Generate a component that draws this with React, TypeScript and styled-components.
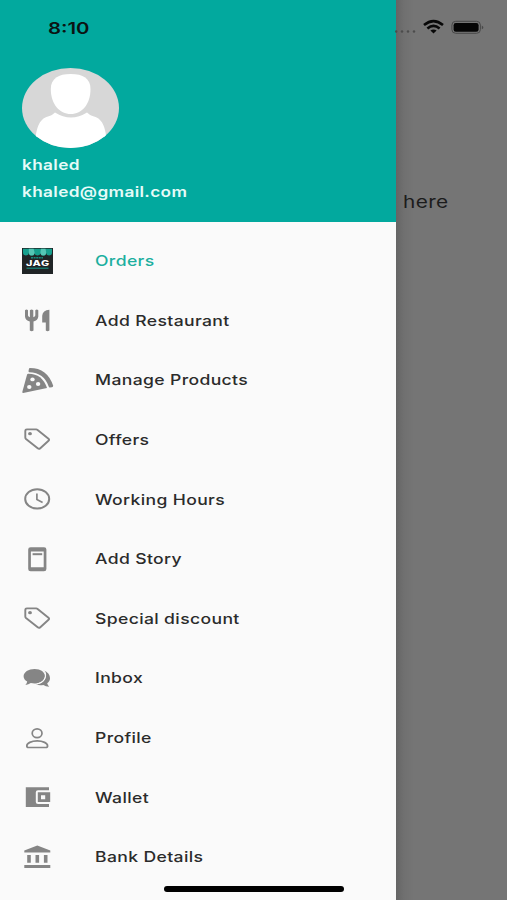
import React from 'react';
import styled, { createGlobalStyle } from 'styled-components';

const GlobalStyle = createGlobalStyle`
  * { box-sizing: border-box; }
  body {
    margin: 0;
    background: #757575;
    font-family: Inter, 'Liberation Sans', sans-serif;
  }
`;

const Screen = styled.div`
  position: relative;
  display: flex;
  width: 507px;
  height: 900px;
  overflow: hidden;
  background: #757575;
`;

const Drawer = styled.aside`
  display: flex;
  flex-direction: column;
  flex: none;
  width: 395.5px;
  height: 900px;
  background: #fafafa;
`;

const Header = styled.header`
  display: flex;
  flex-direction: column;
  height: 222px;
  padding: 17.5px 22px 0;
  background: #02a99e;
`;

const Stretched = styled.span<{ $scale: number }>`
  display: block;
  width: max-content;
  white-space: nowrap;
  transform: scaleX(${(p) => p.$scale});
  transform-origin: left center;
`;

const Clock = styled(Stretched)`
  height: 20px;
  margin-left: 25.5px;
  font-size: 16px;
  font-weight: 600;
  line-height: 20px;
  color: #0b1413;
`;

const Avatar = styled.svg`
  display: block;
  flex: none;
  width: 97px;
  height: 80px;
  margin: 30.5px 0 4px;
`;

const Account = styled(Stretched)`
  height: 26.5px;
  font-size: 14.5px;
  font-weight: 600;
  line-height: 26.5px;
  letter-spacing: 0.3px;
  color: #e6fbf8;
`;

const Menu = styled.nav`
  display: flex;
  flex-direction: column;
  padding-top: 8.7px;
`;

const Item = styled.a<{ $active?: boolean }>`
  display: flex;
  flex: none;
  align-items: center;
  gap: 41.6px;
  height: 59.65px;
  padding-left: 22px;
  color: ${(p) => (p.$active ? '#1caf9f' : '#2b2b2b')};
  font-size: 14.5px;
  font-weight: 500;
  line-height: 20px;
  letter-spacing: 0.3px;
`;

const Label = styled(Stretched)`
  padding-top: 1px;
`;

const Icon = styled.svg`
  flex: none;
  width: 31px;
  height: 26px;
  overflow: visible;
  color: #858585;
`;

const Backdrop = styled.main`
  flex: 1;
  padding: 18px 0 0;
  background: linear-gradient(90deg, #656565 0, #707070 8px, #757575 18px);
`;

const StatusIcons = styled.svg`
  display: block;
  width: 111px;
  height: 20px;
  overflow: visible;
`;

const Message = styled(Stretched)`
  margin: 152px 0 0 7px;
  font-size: 17px;
  line-height: 24px;
  letter-spacing: 0.3px;
  color: #1c1c1c;
`;

const HomeIndicator = styled.div`
  position: absolute;
  left: 164px;
  top: 886px;
  width: 180px;
  height: 5.5px;
  border-radius: 3px;
  background: #000;
`;

const tag = (
  <>
    <path
      d="M4.9 3.4H14.2Q15 3.4 15.6 3.9L26.5 12.7Q27.7 13.7 26.5 14.7L18.3 22.2Q17 23.4 15.7 22.3L4 13Q3.3 12.4 3.3 11.6V4.8Q3.3 3.4 4.9 3.4Z"
      fill="none"
      stroke="currentColor"
      strokeWidth="1.9"
    />
    <ellipse cx="8" cy="7.7" rx="1.9" ry="1.6" fill="currentColor" />
  </>
);

const icons: Record<string, React.ReactNode> = {
  store: (
    <>
      <rect width="31" height="26" fill="#202426" />
      <path d="M1 .8H30V4.5A2.9 3 0 0 1 24.2 4.5A2.9 3 0 0 1 18.4 4.5A2.9 3 0 0 1 12.6 4.5A2.9 3 0 0 1 6.8 4.5A2.9 3 0 0 1 1 4.5Z" fill="#169f8d" />
      <path d="M6.8 .8H11.6L12.6 4.5A2.9 3 0 0 1 6.8 4.5ZM19 .8H23.5L24.2 4.5A2.9 3 0 0 1 18.4 4.5Z" fill="#55c6b5" />
      <path d="M9 9.8H21" stroke="#168b7d" strokeWidth="1.5" strokeDasharray="2 .6" />
      <text x="4" y="17.6" fontSize="7.5" fontWeight="800" textLength="23.5" lengthAdjust="spacingAndGlyphs" fill="#fff">JAG</text>
      <path d="M4.5 20.2H26.5" stroke="#179b8b" strokeWidth="1" />
    </>
  ),
  restaurant: (
    <g fill="currentColor">
      <path d="M3 3.2Q4.5 2 6 3.2V8.6Q6.2 9.9 7.9 10.2V3.2Q9.6 2 11.3 3.2V10.2Q13.1 9.9 13.3 8.6V3.2Q14.8 2 16.3 3.2V9.5Q16 13.6 11.5 14.5V23.6Q9.7 24.9 7.8 23.6V14.5Q3.3 13.6 3 9.5Z" />
      <path d="M27.4 2.8V23.6Q25.6 24.9 23.8 23.6V15.6H20.2V8.8Q20.7 3.3 27.4 2.8Z" />
    </g>
  ),
  pizza: (
    <>
      <path d="M7.8 .9Q25.4 .9 31.2 18.8Q31.2 20 30 20.2L27.8 20.5Q27 20.5 26.7 19.5Q22 5.5 7.3 5.2Q6.3 5 6.5 4L7 1.7Q7.2 .9 7.8 .9Z" fill="currentColor" />
      <path d="M6.2 6.7Q20.2 6.5 25 21L1.2 25.9Q.2 26 .3 24.9L5 7.7Q5.3 6.8 6.2 6.7Z" fill="currentColor" />
      <g fill="#fafafa">
        <ellipse cx="10.5" cy="12.4" rx="2.2" ry="1.9" />
        <ellipse cx="16.1" cy="17" rx="2.2" ry="1.9" />
        <ellipse cx="7.3" cy="20" rx="2.2" ry="1.9" />
      </g>
    </>
  ),
  tag,
  clock: (
    <g fill="none" stroke="currentColor" strokeWidth="2">
      <ellipse cx="15.2" cy="12.9" rx="12" ry="9.7" />
      <path d="M14.9 7.6V13.5L20.6 16.4" strokeWidth="1.7" />
    </g>
  ),
  story: (
    <g fill="currentColor">
      <path fillRule="evenodd" d="M8.6 1.2H22Q24.4 1.2 24.4 3.4V23Q24.4 25.2 22 25.2H8.6Q6.2 25.2 6.2 23V3.4Q6.2 1.2 8.6 1.2ZM8.9 5.4V21.2H21.7V5.4Z" />
      <rect x="10.6" y="7.2" width="9.6" height="2" />
    </g>
  ),
  chat: (
    <g fill="currentColor">
      <path d="M21.6 5.4C25.8 6.8 28 9.7 28 13.3C28 15.3 27 17 25.2 18.3Q25.6 20.2 27.2 21.7Q23.6 21.7 21.4 19.9Q17.2 20.6 14 19.4C21.5 18.6 27 12.5 21.6 5.4Z" />
      <path d="M12.6 3.9C18.7 3.9 23 7 23 11.2C23 15.4 18.7 18.5 12.6 18.5Q10.6 18.5 8.8 18.1Q6.5 19.8 3.4 19.9Q5 18.5 5.2 16.6Q1.6 14.6 1.6 11.2C1.6 7 6.5 3.9 12.6 3.9Z" />
      <path d="M22.2 5.6C25.6 11.5 22.2 17.7 14.6 19" fill="none" stroke="#fafafa" strokeWidth="1.1" />
    </g>
  ),
  person: (
    <g fill="none" stroke="currentColor" strokeWidth="1.7">
      <ellipse cx="15.1" cy="8.2" rx="4.9" ry="4.4" />
      <path d="M15.2 15.8C21 15.8 25.6 18.3 25.6 20.9Q25.6 22.5 23.8 22.5H6.5Q4.8 22.5 4.8 20.9C4.8 18.3 9.3 15.8 15.2 15.8Z" />
    </g>
  ),
  wallet: (
    <g fill="currentColor" fillRule="evenodd">
      <path d="M3.8 3.3H27V6.3H16Q13.8 6.3 13.8 8.3V17.9Q13.8 20 16 20H27V22.9H3.8Z" />
      <path d="M15.8 8.3H28.2V18H15.8ZM19 11.2V15.2H23.2V11.2Z" />
    </g>
  ),
  bank: (
    <path fill="currentColor" d="M15.3 1.6L28.3 6.6V8.4H2.3V6.6ZM5.2 10.9H8.8V18.8H5.2ZM13.5 10.9H17.1V18.8H13.5ZM21.9 10.9H25.5V18.8H21.9ZM2.3 21H28.3V24H2.3Z" />
  ),
};

const items: { label: string; icon: string; active?: boolean }[] = [
  { label: 'Orders', icon: 'store', active: true },
  { label: 'Add Restaurant', icon: 'restaurant' },
  { label: 'Manage Products', icon: 'pizza' },
  { label: 'Offers', icon: 'tag' },
  { label: 'Working Hours', icon: 'clock' },
  { label: 'Add Story', icon: 'story' },
  { label: 'Special discount', icon: 'tag' },
  { label: 'Inbox', icon: 'chat' },
  { label: 'Profile', icon: 'person' },
  { label: 'Wallet', icon: 'wallet' },
  { label: 'Bank Details', icon: 'bank' },
];

export default function App() {
  return (
    <Screen>
      <GlobalStyle />
      <Drawer>
        <Header>
          <Clock $scale={1.27}>8:10</Clock>
          <Avatar viewBox="0 0 97 80">
            <defs>
              <clipPath id="avatar-clip">
                <ellipse cx="48.5" cy="40" rx="48.5" ry="40" />
              </clipPath>
            </defs>
            <g clipPath="url(#avatar-clip)">
              <rect width="97" height="80" fill="#d7d7d7" />
              <path d="M13 80C13.5 60 17 51 26 48.5C29 47.5 31 46.5 33 44.5Q49 54.5 65 44.5C67 46.5 69 47.5 72 48.5C81 51 84.5 60 85 80Z" fill="#fff" />
              <path d="M48.7 6C61 6 68.5 10.5 68.5 21C68.5 36 60 46 48.7 46C37.5 46 28.8 36 28.8 21C28.8 10.5 36.5 6 48.7 6Z" fill="#fff" />
            </g>
          </Avatar>
          <Account $scale={1.188}>khaled</Account>
          <Account $scale={1.188}>khaled@gmail.com</Account>
        </Header>
        <Menu>
          {items.map((item) => (
            <Item key={item.label} $active={item.active}>
              <Icon viewBox="0 0 31 26">{icons[item.icon]}</Icon>
              <Label $scale={1.212}>{item.label}</Label>
            </Item>
          ))}
        </Menu>
      </Drawer>
      <Backdrop>
        <StatusIcons viewBox="0 0 111 20">
          <g fill="#4c4c4c">
            <circle cx="0.2" cy="13.5" r="1.2" />
            <circle cx="6" cy="13.5" r="1.2" />
            <circle cx="12" cy="13.5" r="1.2" />
            <circle cx="18" cy="13.5" r="1.2" />
          </g>
          <g fill="none" stroke="#080808" strokeWidth="2.6">
            <path d="M28 7Q37.5 -0.8 47 7" />
            <path d="M31.4 10.4Q37.5 5.4 43.6 10.4" />
          </g>
          <path d="M34.4 12.6Q37.5 10.2 40.6 12.6L37.5 15.5Z" fill="#080808" />
          <rect x="55.9" y="3.3" width="28.5" height="12" rx="3.8" fill="none" stroke="#484848" strokeWidth="1" />
          <rect x="57.6" y="5" width="25" height="8.7" rx="2.2" fill="#050505" />
          <path d="M85.8 7.4Q89 9.3 85.8 11.3Z" fill="#484848" />
        </StatusIcons>
        <Message $scale={1.225}>here</Message>
      </Backdrop>
      <HomeIndicator />
    </Screen>
  );
}
